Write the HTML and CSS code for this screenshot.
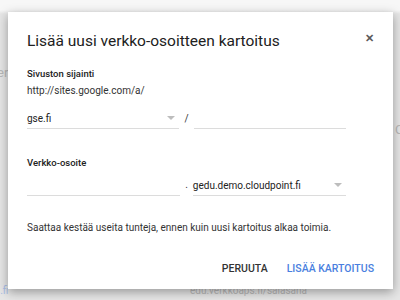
FILE: index.html
```html
<!DOCTYPE html>
<html lang="en">
<head>
  <meta charset="UTF-8" />
  <title>Lisää uusi verkko-osoitteen kartoitus</title>
  <link rel="stylesheet" href="styles.css">
</head>
<body>
  <div class="page">
    <span class="bg-text bg-left">er</span>
    <span class="bg-text bg-right">C</span>
    <span class="bg-text bg-link">s.fi</span>
    <span class="bg-text bg-bottom">edu.verkkoaps.fi/salasana</span>

    <div class="dialog">
      <div class="header">
        <h2>Lisää uusi verkko-osoitteen kartoitus</h2>
        <span class="close">&#x2715;</span>
      </div>

      <div class="label">Sivuston sijainti</div>
      <div class="prefix">http://sites.google.com/a/</div>

      <div class="row row-first">
        <div class="field select">
          <span>gse.fi</span>
          <span class="arrow"></span>
        </div>
        <span class="sep">/</span>
        <div class="field"></div>
      </div>

      <div class="label label-second">Verkko-osoite</div>
      <div class="row row-second">
        <div class="field"></div>
        <span class="sep">.</span>
        <div class="field select">
          <span>gedu.demo.cloudpoint.fi</span>
          <span class="arrow"></span>
        </div>
      </div>

      <p class="note">Saattaa kestää useita tunteja, ennen kuin uusi kartoitus alkaa toimia.</p>

      <div class="actions">
        <button class="btn">PERUUTA</button>
        <button class="btn primary">LISÄÄ KARTOITUS</button>
      </div>
    </div>
  </div>
</body>
</html>
```

FILE: styles.css
```css
body {
  margin: 0;
  font-family: Roboto, 'Liberation Sans', sans-serif;
  color: #222;
}
.page {
  position: relative;
  width: 400px;
  height: 300px;
  overflow: hidden;
  background: linear-gradient(to bottom, #f7f7f7 0, #f7f7f7 10px, #e6e6e6 14px, #e6e6e6 100%);
  padding: 12px 7px 0 8px;
  box-sizing: border-box;
}
.bg-text {
  position: absolute;
  font-size: 10px;
  color: #b8b8b8;
}
.bg-left { left: -3px; top: 65px; font-size: 13px; }
.bg-right { left: 395px; top: 122px; font-size: 13px; }
.bg-link { left: -5px; top: 285px; color: #a9bde6; }
.bg-bottom { left: 190px; top: 285px; }
.dialog {
  position: relative;
  background: #fff;
  height: 277px;
  box-sizing: border-box;
  padding: 19px 0 0 19px;
  box-shadow: 0 3px 10px rgba(0,0,0,0.35);
}
.header {
  display: flex;
  justify-content: space-between;
  align-items: center;
  padding-right: 20px;
}
h2 {
  margin: 0;
  font-size: 15.5px;
  font-weight: 400;
  line-height: 20px;
  color: #212121;
}
.close {
  font-size: 10.5px;
  color: #5a5a5a;
  font-weight: 700;
  margin-top: -6px;
  margin-right: -1px;
}
.label {
  margin-top: 16px;
  font-size: 9.5px;
  font-weight: 500;
  color: #222;
  line-height: 14px;
}
.label-second {
  margin-top: 27px;
}
.prefix {
  margin-top: 3px;
  font-size: 10px;
  color: #333;
  line-height: 14px;
}
.row {
  display: flex;
  align-items: flex-end;
  gap: 5px;
  width: 319px;
}
.row-first {
  margin-top: 10px;
}
.row-second {
  margin-top: 5px;
}
.field {
  flex: 1;
  height: 20px;
  border-bottom: 1px solid #dcdcdc;
  display: flex;
  align-items: center;
  justify-content: space-between;
  font-size: 10px;
  color: #222;
}
.sep {
  font-size: 10px;
  color: #333;
  align-self: center;
  margin-bottom: 1px;
}
.row-second .sep {
  margin-bottom: 3px;
}
.arrow {
  width: 0;
  height: 0;
  border-left: 4px solid transparent;
  border-right: 4px solid transparent;
  border-top: 4px solid #bdbdbd;
  margin-right: 4px;
}
.note {
  margin: 25px 0 0;
  font-size: 10px;
  color: #333;
  line-height: 14px;
}
.actions {
  display: flex;
  justify-content: flex-end;
  gap: 19px;
  margin-top: 27px;
  padding-right: 19px;
}
.btn {
  background: none;
  border: none;
  padding: 0;
  font-family: Roboto, 'Liberation Sans', sans-serif;
  font-size: 10.5px;
  font-weight: 500;
  line-height: 14px;
  color: #333;
  cursor: pointer;
}
.btn.primary {
  color: #4a7fe0;
}
```
